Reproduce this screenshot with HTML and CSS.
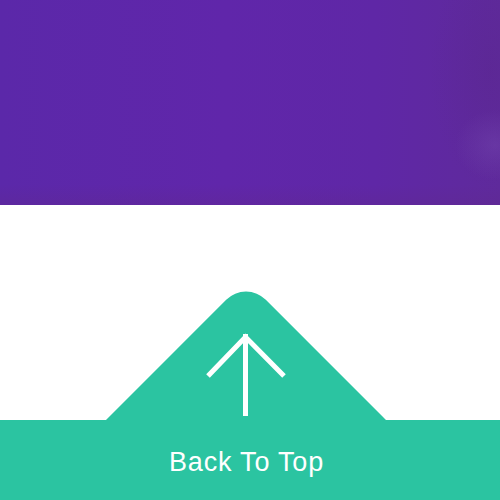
FILE: index.html
```html
<!DOCTYPE html>
<html lang="en">
<head>
<meta charset="utf-8">
<title>Back To Top</title>
<link rel="stylesheet" href="styles.css">
</head>
<body>
<section class="hero"></section>
<div class="gap"></div>
<footer class="footer">
  <svg class="peak" width="292" height="131" viewBox="0 0 292 131">
    <path d="M5 131 L126.2 9.8 A28 28 0 0 1 165.8 9.8 L287 131 Z" fill="#2bc4a1"/>
    <path d="M145.5 44 V126" stroke="#fff" stroke-width="5" fill="none"/>
    <path d="M108 86 L145.5 47 L184 86" stroke="#fff" stroke-width="5" fill="none"/>
  </svg>
  <a class="label" href="#">Back To Top</a>
</footer>
</body>
</html>
```
FILE: styles.css
```css
html, body {
  margin: 0;
  padding: 0;
  background: #ffffff;
  overflow: hidden;
}
body {
  width: 500px;
  height: 500px;
  font-family: "Liberation Sans", Arial, sans-serif;
}
.hero {
  height: 205px;
  background:
    radial-gradient(ellipse 40px 35px at 495px 145px, rgba(115, 70, 175, 0.45), rgba(115, 70, 175, 0) 100%),
    radial-gradient(ellipse 60px 120px at 490px 70px, rgba(85, 35, 130, 0.25), rgba(85, 35, 130, 0) 100%),
    linear-gradient(0deg, rgba(95, 40, 140, 0.35) 0%, rgba(95, 40, 140, 0) 10%),
    linear-gradient(90deg, #5b28a9 0%, #6026aa 45%, #5f27a6 75%, #5f2a9c 100%);
}
.gap {
  height: 215px;
}
.footer {
  position: relative;
  height: 80px;
  background: #2bc4a1;
  text-align: center;
}
.peak {
  position: absolute;
  left: 100px;
  top: -130px;
  display: block;
}
.label {
  position: relative;
  display: block;
  padding-top: 27px;
  line-height: 30px;
  font-size: 27px;
  letter-spacing: 0.8px;
  color: #ffffff;
  text-decoration: none;
  margin-left: -7px;
}
```
